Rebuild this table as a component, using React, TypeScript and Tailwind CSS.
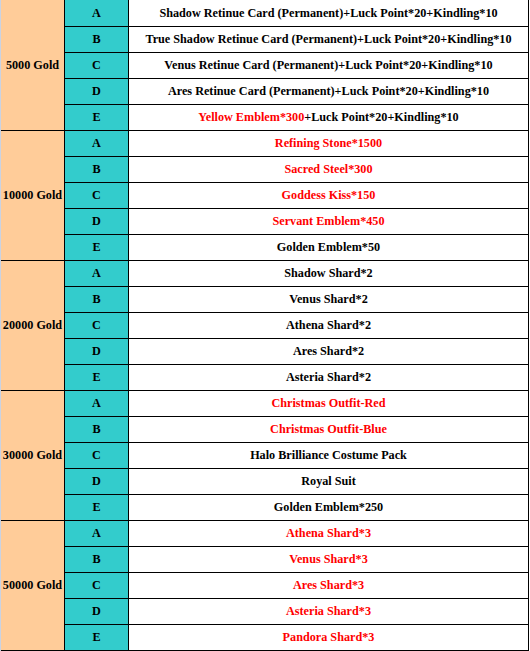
type Part = { text: string; red?: boolean };
type Row = { letter: string; parts: Part[] };
type Group = { label: string; rows: Row[] };

const r = (text: string): Part => ({ text, red: true });
const b = (text: string): Part => ({ text });

const GROUPS: Group[] = [
  {
    label: '5000 Gold',
    rows: [
      { letter: 'A', parts: [b('Shadow Retinue Card (Permanent)+Luck Point*20+Kindling*10')] },
      { letter: 'B', parts: [b('True Shadow Retinue Card (Permanent)+Luck Point*20+Kindling*10')] },
      { letter: 'C', parts: [b('Venus Retinue Card (Permanent)+Luck Point*20+Kindling*10')] },
      { letter: 'D', parts: [b('Ares Retinue Card (Permanent)+Luck Point*20+Kindling*10')] },
      { letter: 'E', parts: [r('Yellow Emblem*300'), b('+Luck Point*20+Kindling*10')] },
    ],
  },
  {
    label: '10000 Gold',
    rows: [
      { letter: 'A', parts: [r('Refining Stone*1500')] },
      { letter: 'B', parts: [r('Sacred Steel*300')] },
      { letter: 'C', parts: [r('Goddess Kiss*150')] },
      { letter: 'D', parts: [r('Servant Emblem*450')] },
      { letter: 'E', parts: [b('Golden Emblem*50')] },
    ],
  },
  {
    label: '20000 Gold',
    rows: [
      { letter: 'A', parts: [b('Shadow Shard*2')] },
      { letter: 'B', parts: [b('Venus Shard*2')] },
      { letter: 'C', parts: [b('Athena Shard*2')] },
      { letter: 'D', parts: [b('Ares Shard*2')] },
      { letter: 'E', parts: [b('Asteria Shard*2')] },
    ],
  },
  {
    label: '30000 Gold',
    rows: [
      { letter: 'A', parts: [r('Christmas Outfit-Red')] },
      { letter: 'B', parts: [r('Christmas Outfit-Blue')] },
      { letter: 'C', parts: [b('Halo Brilliance Costume Pack')] },
      { letter: 'D', parts: [b('Royal Suit')] },
      { letter: 'E', parts: [b('Golden Emblem*250')] },
    ],
  },
  {
    label: '50000 Gold',
    rows: [
      { letter: 'A', parts: [r('Athena Shard*3')] },
      { letter: 'B', parts: [r('Venus Shard*3')] },
      { letter: 'C', parts: [r('Ares Shard*3')] },
      { letter: 'D', parts: [r('Asteria Shard*3')] },
      { letter: 'E', parts: [r('Pandora Shard*3')] },
    ],
  },
];

function rowClass(gi: number, ri: number) {
  const last = ri === 4;
  if (last) return 'h-[25px]';
  if (gi === 0 && ri === 0) return 'h-[27px] border-b border-black';
  return 'h-[26px] border-b border-black';
}

export default function App() {
  return (
    <div className="w-[530px] h-[651px] bg-white font-['Liberation_Serif',serif] text-[12.2px] font-bold text-black">
      <div className="w-[529px] border-l border-l-[#c9d2e3] border-r border-r-black">
        {GROUPS.map((group, gi) => (
          <div key={group.label} className="flex border-b border-black">
            <div className="w-[64px] shrink-0 bg-[#ffcc99] border-r border-black flex items-center justify-center">
              {group.label}
            </div>
            <div className="flex-1 flex flex-col">
              {group.rows.map((row, ri) => (
                <div key={row.letter} className={`flex ${rowClass(gi, ri)}`}>
                  <div className="w-[64px] shrink-0 bg-[#33cccc] border-r border-black flex items-center justify-center">
                    {row.letter}
                  </div>
                  <div className="flex-1 flex items-center justify-center whitespace-nowrap">
                    {row.parts.map((p, pi) => (
                      <span key={pi} className={p.red ? 'text-[#ff0000]' : ''}>
                        {p.text}
                      </span>
                    ))}
                  </div>
                </div>
              ))}
            </div>
          </div>
        ))}
      </div>
    </div>
  );
}
